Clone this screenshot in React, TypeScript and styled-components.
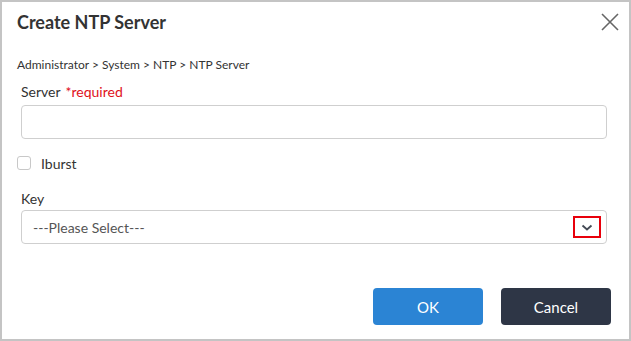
import React from "react"
import styled, { createGlobalStyle } from "styled-components"

const GlobalStyle = createGlobalStyle`
  html, body {
    margin: 0;
    padding: 0;
    background: #ffffff;
  }
  body {
    font-family: Lato, "Open Sans", sans-serif;
    color: #333333;
  }
`

const Dialog = styled.div`
  width: 631px;
  height: 341px;
  box-sizing: border-box;
  border: 2px solid #c4c4c4;
  background: #ffffff;
  padding-top: 8px;
  display: flex;
  flex-direction: column;
`

const Header = styled.div`
  display: flex;
  justify-content: space-between;
  align-items: flex-start;
  padding: 0 10px 0 15px;
  height: 24px;
`

const Title = styled.h1`
  margin: 0;
  font-size: 18px;
  line-height: 24px;
  font-weight: 700;
  color: #333333;
`

const CloseButton = styled.button`
  border: 0;
  background: none;
  padding: 0;
  margin-top: 3px;
  width: 18px;
  height: 18px;
  display: flex;
  cursor: pointer;
`

const Breadcrumb = styled.div`
  margin-top: 23px;
  padding-left: 15px;
  font-size: 12px;
  line-height: 16px;
  color: #333333;
`

const Form = styled.div`
  padding: 0 22px 0 19px;
  display: flex;
  flex-direction: column;
`

const Label = styled.div<{ $top: number }>`
  margin-top: ${(p) => p.$top}px;
  font-size: 14px;
  line-height: 18px;
  color: #333333;
`

const Required = styled.span`
  color: #e0101a;
  margin-left: 5px;
`

const TextInput = styled.input<{ $top: number }>`
  margin-top: ${(p) => p.$top}px;
  height: 34px;
  box-sizing: border-box;
  border: 1px solid #cfcfcf;
  border-radius: 4px;
  padding: 0 11px;
  font-family: inherit;
  font-size: 14px;
  outline: none;
`

const CheckRow = styled.label`
  margin-top: 15px;
  margin-left: -4px;
  display: flex;
  align-items: center;
  height: 18px;
  font-size: 14px;
  color: #333333;
`

const Box = styled.span`
  width: 14px;
  height: 14px;
  box-sizing: border-box;
  border: 1px solid #c8c8c8;
  border-radius: 3px;
  margin-right: 10px;
`

const Select = styled.div`
  margin-top: 2px;
  height: 34px;
  box-sizing: border-box;
  border: 1px solid #cfcfcf;
  border-radius: 4px;
  padding: 0 5px 0 11px;
  display: flex;
  align-items: center;
  justify-content: space-between;
  font-size: 14px;
  color: #555555;
`

const Arrow = styled.span`
  width: 28px;
  height: 22px;
  box-sizing: border-box;
  border: 2px solid #e8000b;
  display: flex;
  align-items: center;
  justify-content: center;
`

const Footer = styled.div`
  margin-top: 44px;
  padding-right: 18px;
  display: flex;
  justify-content: flex-end;
  gap: 18px;
`

const Button = styled.button<{ $dark?: boolean }>`
  width: 110px;
  height: 37px;
  border: 0;
  border-radius: 4px;
  background: ${(p) => (p.$dark ? "#2e3646" : "#2b84d4")};
  color: #ffffff;
  font-family: inherit;
  font-size: 15px;
  cursor: pointer;
`

export default function App() {
  return (
    <>
      <GlobalStyle />
      <Dialog>
        <Header>
          <Title>Create NTP Server</Title>
          <CloseButton aria-label="close">
            <svg width="18" height="18" viewBox="0 0 18 18">
              <path d="M1 1 L17 17 M17 1 L1 17" stroke="#666" strokeWidth="1.6" fill="none" />
            </svg>
          </CloseButton>
        </Header>
        <Breadcrumb>Administrator &gt; System &gt; NTP &gt; NTP Server</Breadcrumb>
        <Form>
          <Label $top={10}>
            Server<Required>*required</Required>
          </Label>
          <TextInput $top={4} />
          <CheckRow>
            <Box />
            Iburst
          </CheckRow>
          <Label $top={18}>Key</Label>
          <Select>
            <span>---Please Select---</span>
            <Arrow>
              <svg width="12" height="7" viewBox="0 0 12 7">
                <path d="M1.5 1.5 L6 5.5 L10.5 1.5" stroke="#444a55" strokeWidth="1.8" fill="none" />
              </svg>
            </Arrow>
          </Select>
        </Form>
        <Footer>
          <Button>OK</Button>
          <Button $dark>Cancel</Button>
        </Footer>
      </Dialog>
    </>
  )
}
